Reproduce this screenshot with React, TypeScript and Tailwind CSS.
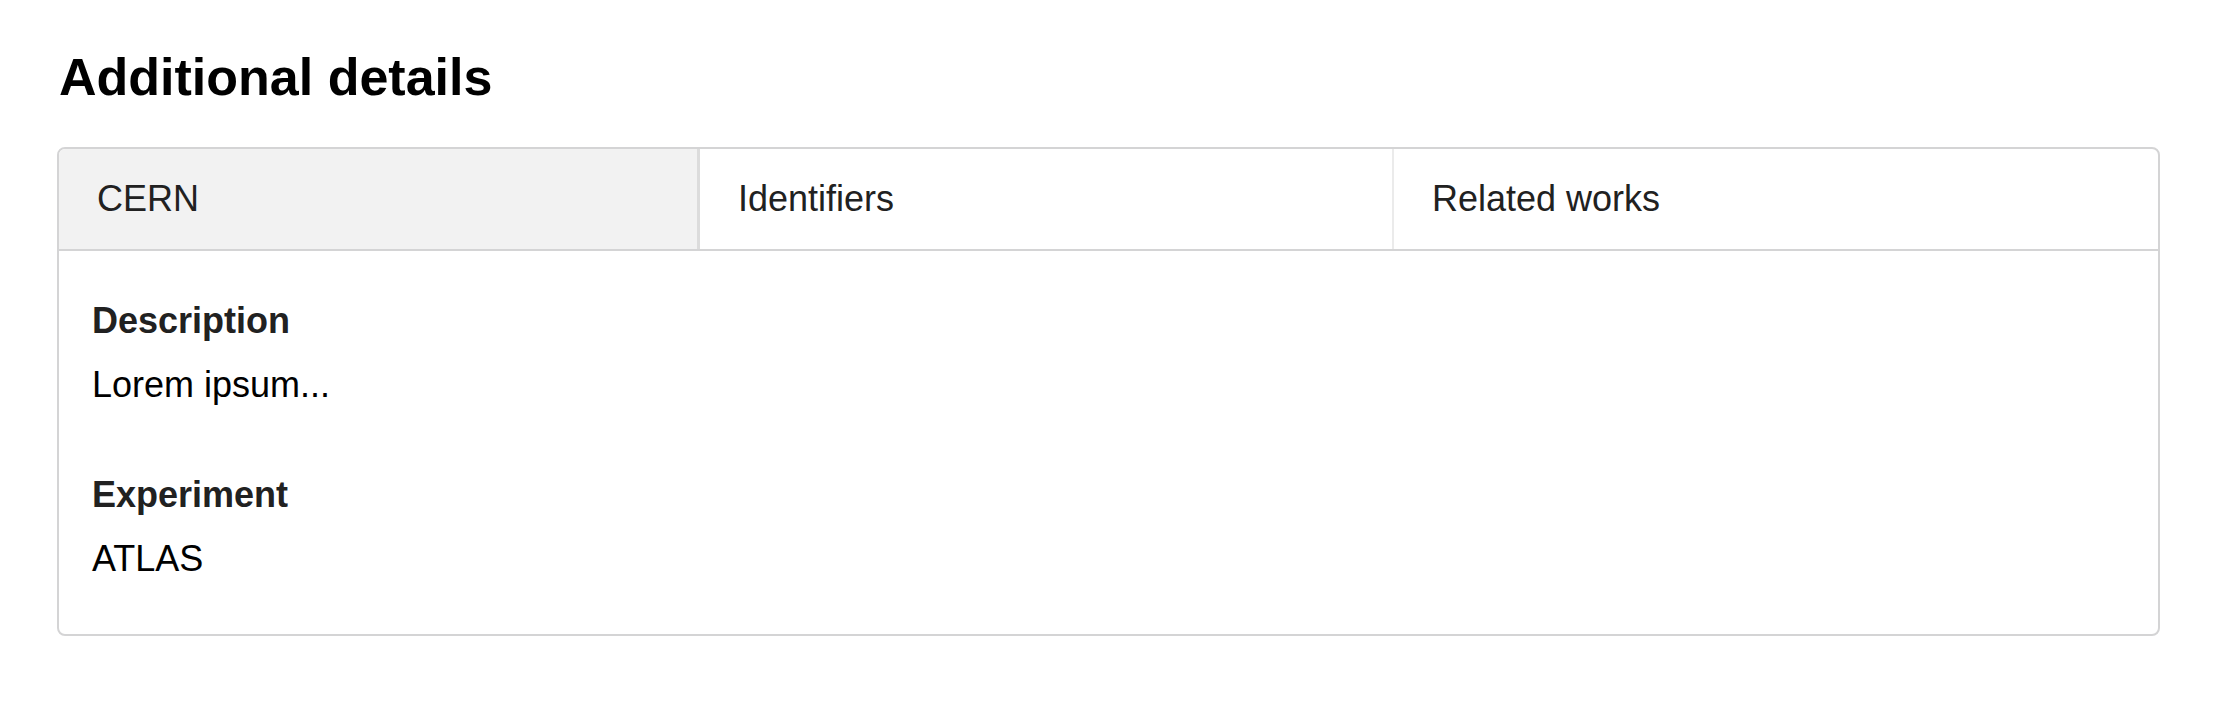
import React, { useState } from 'react';

const tabs = ['CERN', 'Identifiers', 'Related works'];

const fields = [
  { label: 'Description', value: 'Lorem ipsum...' },
  { label: 'Experiment', value: 'ATLAS' },
];

export default function App() {
  const [active, setActive] = useState(0);

  return (
    <div className="min-h-screen bg-white pl-[57px] pr-[62px] pt-[46px] font-['Liberation_Sans',Arial,sans-serif]">
      <h2 className="ml-[2px] mb-[39px] text-[52px] leading-[62px] font-bold text-black">Additional details</h2>

      <div className="rounded-[8px] border-2 border-[#d4d4d5] overflow-hidden">
        <div className="flex border-b-2 border-[#d4d4d5]">
          {tabs.map((tab, i) => (
            <button
              key={tab}
              onClick={() => setActive(i)}
              className={
                'flex-auto h-[100px] pb-[2px] px-[38px] text-left text-[36px] leading-[41px] text-[#212121] ' +
                (i === active ? 'bg-[#f2f2f2] border-r-[3px] border-[#dcdcdc]' : '') +
                (i === 1 ? ' border-r-2 border-[#ebebeb]' : '')
              }
            >
              {tab}
            </button>
          ))}
        </div>

        <div className="pl-[33px] pt-[45px] pb-[50px]">
          {fields.map((f, i) => (
            <div key={f.label} className={i > 0 ? 'mt-[60px]' : ''}>
              <div className="text-[36px] leading-[50px] font-bold text-[#212121]">{f.label}</div>
              <div className="mt-[14px] text-[36px] leading-[50px] text-black">{f.value}</div>
            </div>
          ))}
        </div>
      </div>
    </div>
  );
}
